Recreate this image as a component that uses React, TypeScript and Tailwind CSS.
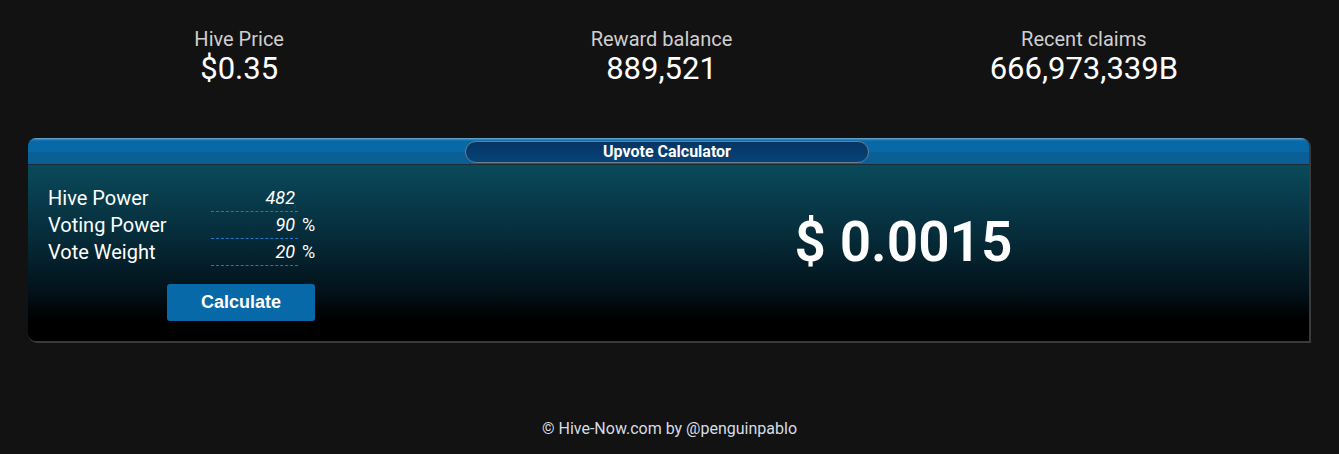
import React from "react";

const Stat = ({ label, value }: { label: string; value: string }) => (
  <div className="flex flex-col items-center">
    <div className="text-[20px] leading-[24px] text-[#cfcfcf]">{label}</div>
    <div className="text-[31px] leading-[35px] text-white">{value}</div>
  </div>
);

const Row = ({ label, value, unit }: { label: string; value: string; unit?: string }) => (
  <div className="flex items-start h-[27px]">
    <div className="w-[163px] text-[20px] leading-[26px] text-white">{label}</div>
    <div className="w-[87px] h-[27px] border-b border-dashed border-[#1f78c8] text-right pr-[3px] italic text-[18px] leading-[26px] text-white">
      {value}
    </div>
    {unit && <div className="ml-[4px] text-[18px] leading-[26px] text-white">{unit}</div>}
  </div>
);

export default function App() {
  return (
    <div
      className="w-[1339px] h-[454px] bg-[#121212] overflow-hidden"
      style={{ fontFamily: "Roboto, 'Liberation Sans', sans-serif" }}
    >
      <div className="ml-[28px] w-[1267px] grid grid-cols-3 pt-[27px]">
        <Stat label="Hive Price" value="$0.35" />
        <Stat label="Reward balance" value="889,521" />
        <Stat label="Recent claims" value="666,973,339B" />
      </div>

      <div className="mt-[52px] ml-[28px] w-[1281px] rounded-t-[8px] rounded-bl-[8px] shadow-[1px_1px_0_1px_#3a3a3a] overflow-hidden">
        <div className="relative h-[27px] border-b border-[#1c2a33] bg-[linear-gradient(to_bottom,#7fb3d6_0px,#3f8bc0_1px,#0769a8_3px,#0769a8_14px,#0a5f97_14px,#0a5f97_26px)] flex justify-center items-start">
          <div className="mt-[3px] mr-[3px] w-[404px] h-[22px] rounded-full border border-[#6b7c8c] bg-[linear-gradient(to_bottom,#063563,#074378)] flex items-center justify-center text-[16px] font-bold text-white">
            Upvote Calculator
          </div>
        </div>
        <div className="h-[176px] bg-[linear-gradient(to_bottom,#0a4a5b_0%,#062c3a_40%,#02121a_72%,#000000_88%)] flex">
          <div className="w-[470px] pl-[20px] pt-[20px]">
            <Row label="Hive Power" value="482" />
            <Row label="Voting Power" value="90" unit="%" />
            <Row label="Vote Weight" value="20" unit="%" />
            <button
              className="mt-[18px] ml-[119px] w-[148px] h-[37px] rounded-[3px] bg-[#0769a8] text-white font-bold text-[18px]"
              style={{ fontFamily: "'Liberation Sans', Arial, sans-serif" }}
            >
              Calculate
            </button>
          </div>
          <div className="flex-1 flex items-center justify-center pb-[22px]">
            <span className="text-[55px] font-semibold text-white leading-none">$ 0.0015</span>
          </div>
        </div>
      </div>

      <div className="mt-[76px] text-center text-[16px] text-[#d6dde6]">© Hive-Now.com by @penguinpablo</div>
    </div>
  );
}
